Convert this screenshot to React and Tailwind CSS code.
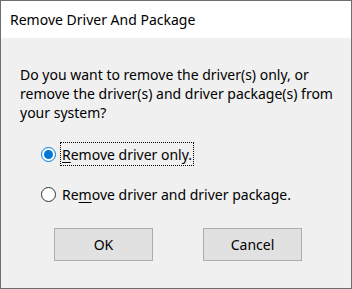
import React from 'react';

function Radio({ checked }) {
  return checked ? (
    <span className="w-[15px] h-[15px] rounded-full border border-[#0078d7] bg-white flex items-center justify-center shrink-0">
      <span className="w-[9px] h-[9px] rounded-full bg-[#0078d7]" />
    </span>
  ) : (
    <span className="w-[15px] h-[15px] rounded-full border border-[#333333] bg-white shrink-0" />
  );
}

export default function App() {
  return (
    <div
      className="w-[352px] h-[289px] border border-[#6e6e6e] bg-[#f0f0f0] flex flex-col text-[#000] text-[14px] font-['Noto_Sans','Open_Sans',sans-serif]"
    >
      <div className="h-[37px] bg-white flex items-center pl-[9px] shrink-0">
        <span className="leading-none">Remove Driver And Package</span>
      </div>
      <div className="flex flex-col pl-[19px] pt-[27px]">
        <p className="leading-[19px] w-[325px]">
          Do you want to remove the driver(s) only, or remove the driver(s) and driver package(s) from your system?
        </p>
        <div className="flex flex-col pl-[21px] mt-[20px]">
          <label className="flex items-center h-[24px]">
            <Radio checked />
            <span className="ml-[4px] h-[24px] px-[1px] flex items-center border border-dotted border-black">
              <span className="underline underline-offset-2">R</span>emove driver only.
            </span>
          </label>
          <label className="flex items-center h-[24px] mt-[16px]">
            <Radio />
            <span className="ml-[4px] px-[2px] flex items-center">
              Re<span className="underline underline-offset-2">m</span>ove driver and driver package.
            </span>
          </label>
        </div>
        <div className="flex gap-[50px] pl-[34px] mt-[22px]">
          <button className="w-[99px] h-[33px] bg-[#e1e1e1] border border-[#adadad]">OK</button>
          <button className="w-[99px] h-[33px] bg-[#e1e1e1] border border-[#adadad]">Cancel</button>
        </div>
      </div>
    </div>
  );
}
